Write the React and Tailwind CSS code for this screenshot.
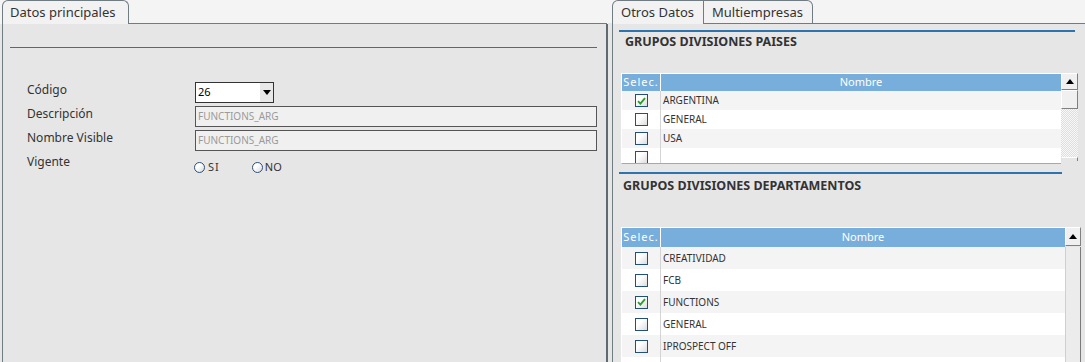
import React from "react";

const Check = ({ checked }) => (
  <div className="w-[13px] h-[13px] border border-[#22507e] bg-[linear-gradient(135deg,#ffffff_0%,#ffffff_35%,#dcdcdc_100%)] flex items-center justify-center shrink-0">
    {checked && (
      <svg width="9" height="8" viewBox="0 0 9 8">
        <path d="M1 4.2 L3.4 6.6 L8 1.2" stroke="#2e9b2e" strokeWidth="1.8" fill="none" />
      </svg>
    )}
  </div>
);

const Radio = () => (
  <div className="w-[11px] h-[11px] rounded-full border border-[#2b4f7a] bg-[linear-gradient(135deg,#ffffff_0%,#ffffff_40%,#d8d8d8_100%)]" />
);

const UpBtn = ({ h }) => (
  <div
    className={`w-full ${h} bg-[#f0f0f0] border-t border-l border-t-white border-l-white border-b border-r border-b-[#808080] border-r-[#808080] flex items-center justify-center`}
  >
    <svg width="8" height="5" viewBox="0 0 8 5">
      <path d="M0 5 L4 0 L8 5 Z" fill="#000" />
    </svg>
  </div>
);

const Table = ({ rows, headerH, rowH, bodyH, bodyW, sbW, variant }) => (
  <div className="flex ml-[2px]">
    <div className="flex flex-col" style={{ width: bodyW }}>
      <div className="flex bg-[#78aedb] text-white text-[11px] border-t border-l border-white" style={{ height: headerH }}>
        <div className="w-[39px] flex items-center justify-center tracking-[1px] border-r border-white">Selec.</div>
        <div className="flex-1 flex items-center justify-center">Nombre</div>
      </div>
      <div className="overflow-hidden border-l border-white border-b border-b-[#a8a8a8]" style={{ height: bodyH }}>
        {rows.map((r, i) => (
          <div
            key={i}
            className={`flex ${i % 2 === 0 ? "bg-[#f4f4f4]" : "bg-white"}`}
            style={{ height: rowH }}
          >
            <div className="w-[39px] flex items-center justify-center border-r border-[#d4d4d4] shrink-0">
              <Check checked={r.c} />
            </div>
            <div className="flex-1 flex items-center pl-[2px] text-[10px] text-[#333]">{r.n}</div>
          </div>
        ))}
      </div>
    </div>
    {variant === 1 ? (
      <div className="flex flex-col" style={{ width: sbW }}>
        <UpBtn h="h-[17px]" />
        <div className="w-full h-[19px] bg-[#f0f0f0] border-t border-l border-t-white border-l-white border-b border-r border-b-[#808080] border-r-[#808080]" />
        <div className="w-full h-[48px] bg-[image:repeating-conic-gradient(#dedede_0_25%,#f8f8f8_0_50%)] bg-[length:2px_2px]" />
        <div className="w-full h-[4px] border-t border-white border-l border-r border-l-[#e0e0e0] border-r-[#808080]" />
      </div>
    ) : (
      <div className="flex flex-col" style={{ width: sbW }}>
        <UpBtn h="h-[19px]" />
        <div className="w-full flex-1 bg-[#ececec] border-l border-r border-l-[#cfcfcf] border-r-[#7a7a7a] mt-[1px]" />
      </div>
    )}
  </div>
);

export default function App() {
  const t1 = [
    { c: true, n: "ARGENTINA" },
    { c: false, n: "GENERAL" },
    { c: false, n: "USA" },
    { c: false, n: "" },
  ];
  const t2 = [
    { c: false, n: "CREATIVIDAD" },
    { c: false, n: "FCB" },
    { c: true, n: "FUNCTIONS" },
    { c: false, n: "GENERAL" },
    { c: false, n: "IPROSPECT OFF" },
    { c: false, n: "" },
  ];
  return (
    <div className="w-[1085px] h-[362px] overflow-hidden bg-[#e6e6e6] font-['Noto_Sans',sans-serif] text-[#333] flex">
      {/* Left panel */}
      <div className="flex flex-col w-[608px] shrink-0">
        <div className="flex h-[24px] bg-[#f4f4f4]">
          <div className="w-[2px] shrink-0" />
          <div className="w-[127px] h-[24px] rounded-t-[6px] border-t border-l border-r border-[#6f7c82] bg-[#f2f2f2] text-[13px] leading-[22px] pl-[7px] text-[#333]">
            Datos principales
          </div>
          <div className="flex-1 border-b border-[#6f7c82] mr-[1px]" />
        </div>
        <div className="flex-1 ml-[2px] border-l border-[#6f7c82] border-r-2 border-r-[#5f6b70] mr-[0px]">
          <div className="mt-[23px] ml-[7px] w-[587px] h-px bg-[#2f73ad]" />
          <div className="mt-[34px] pl-[24px] flex flex-col gap-[3px] text-[12px]">
            <div className="flex h-[21px]">
              <div className="w-[168px] leading-[16px]">Código</div>
              <div className="w-[79px] h-[21px] border border-[#333] bg-white flex items-center justify-between">
                <span className="pl-[2px] text-[11px] text-black">26</span>
                <div className="w-[13px] h-[19px] bg-[#e8e8e8] flex items-center justify-center">
                  <svg width="8" height="5" viewBox="0 0 8 5">
                    <path d="M0 0 L8 0 L4 5 Z" fill="#000" />
                  </svg>
                </div>
              </div>
            </div>
            <div className="flex h-[21px]">
              <div className="w-[168px] leading-[16px]">Descripción</div>
              <div className="w-[402px] h-[21px] border border-[#555] bg-[#f0f0f0] flex items-center pl-[2px] text-[10px] text-[#9a9a9a]">
                FUNCTIONS_ARG
              </div>
            </div>
            <div className="flex h-[21px]">
              <div className="w-[168px] leading-[16px]">Nombre Visible</div>
              <div className="w-[402px] h-[21px] border border-[#555] bg-[#f0f0f0] flex items-center pl-[2px] text-[10px] text-[#9a9a9a]">
                FUNCTIONS_ARG
              </div>
            </div>
            <div className="flex h-[24px]">
              <div className="w-[167px] leading-[16px]">Vigente</div>
              <div className="flex items-center mt-[5px] h-[16px] text-[11px]">
                <Radio />
                <span className="ml-[3px] tracking-[1px]">SI</span>
                <div className="ml-[32px]"><Radio /></div>
                <span className="ml-[2px]">NO</span>
              </div>
            </div>
          </div>
        </div>
      </div>

      {/* gap */}
      <div className="w-[4px] shrink-0 flex flex-col">
        <div className="h-[23px] bg-[#f4f4f4]" />
      </div>

      {/* Right panel */}
      <div className="flex flex-col flex-1">
        <div className="flex h-[24px] bg-[#f4f4f4]">
          <div className="w-[92px] h-[24px] rounded-tl-[6px] border-t border-l border-r border-[#6f7c82] bg-[#f2f2f2] text-[13px] leading-[22px] pl-[8px] text-[#333]">
            Otros Datos
          </div>
          <div className="w-[109px] h-[24px] rounded-tr-[6px] border-t border-r border-b border-[#6f7c82] bg-[#f2f2f2] text-[13px] leading-[22px] pl-[8px] text-[#333]">
            Multiempresas
          </div>
          <div className="flex-1 border-b border-[#6f7c82]" />
        </div>
        <div className="flex-1 border-l border-[#6f7c82] pl-[6px]">
          <div className="mt-[6px] w-[456px] h-[2px] bg-[#2f73ad]" />
          <div className="mt-[2px] ml-[6px] h-[16px] leading-[16px] text-[12.5px] font-bold text-[#333]">
            GRUPOS DIVISIONES PAISES
          </div>
          <div className="mt-[23px]">
            <Table rows={t1} headerH={18} rowH={19} bodyH={73} bodyW={440} sbW={17} variant={1} />
          </div>
          <div className="mt-[8px] w-[443px] h-[2px] bg-[#2f73ad]" />
          <div className="mt-[4px] ml-[4px] h-[16px] leading-[16px] text-[12.5px] font-bold text-[#333]">
            GRUPOS DIVISIONES DEPARTAMENTOS
          </div>
          <div className="mt-[33px]">
            <Table rows={t2} headerH={20} rowH={22} bodyH={140} bodyW={444} sbW={16} variant={2} />
          </div>
        </div>
      </div>
    </div>
  );
}
